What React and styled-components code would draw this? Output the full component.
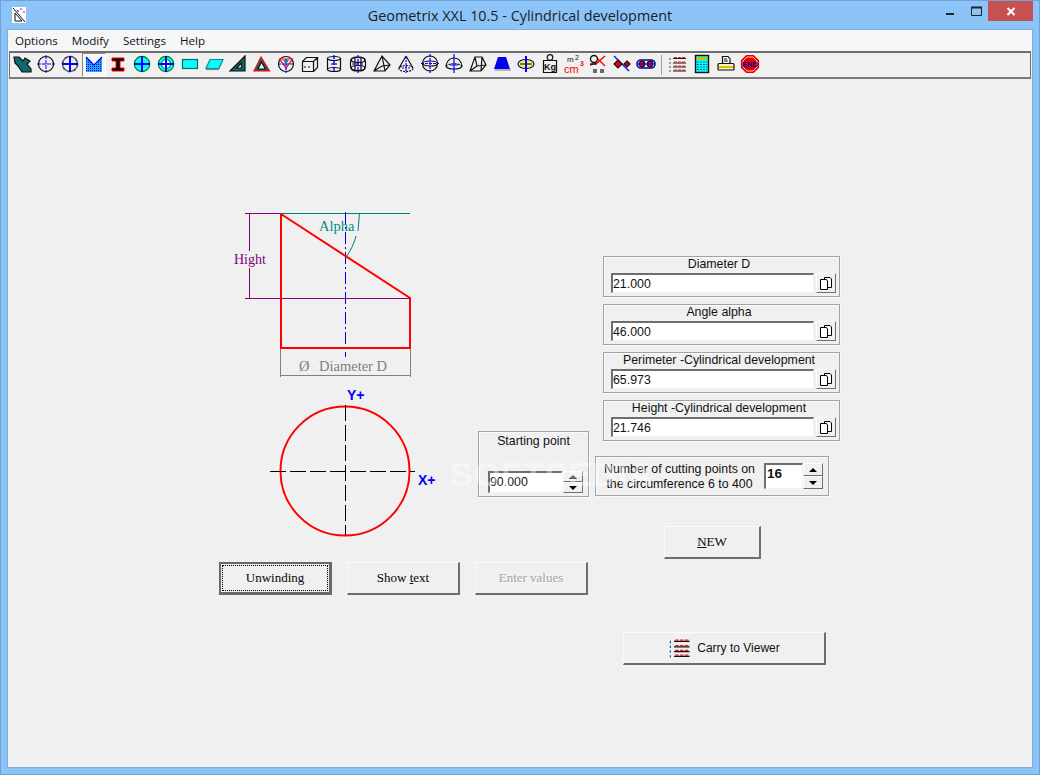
import React from 'react';
import styled, { createGlobalStyle } from 'styled-components';

const GlobalStyle = createGlobalStyle`
  html, body { margin: 0; padding: 0; background: #8cc4f8; }
  body { width: 1040px; height: 775px; overflow: hidden; font-family: "Liberation Sans", Arial, sans-serif; }
`;

const Window = styled.div`
  position: relative;
  width: 1040px;
  height: 775px;
  box-sizing: border-box;
  background: #8cc4f8;
  border: 1px solid #6fa3d8;
  display: flex;
  flex-direction: column;
  overflow: hidden;
`;

const TitleBar = styled.div`
  height: 29px;
  display: flex;
  align-items: flex-start;
  position: relative;
  flex: none;
`;

const AppIcon = styled.svg`
  margin: 6px 0 0 11px;
  flex: none;
`;

const Title = styled.div`
  position: absolute;
  left: 0;
  right: 0;
  top: 5px;
  text-align: center;
  font: 14.4px/20px "Open Sans", sans-serif;
  color: #1c1c1c;
`;

const Controls = styled.div`
  margin-left: auto;
  margin-right: 6px;
  display: flex;
  align-items: flex-start;
`;

const ControlButton = styled.div`
  width: ${p => p.$w}px;
  height: 20px;
  display: flex;
  align-items: center;
  justify-content: center;
  background: ${p => (p.$close ? '#c75050' : 'transparent')};
`;

const Client = styled.div`
  margin: 0 7px 7px 7px;
  flex: 1;
  display: flex;
  flex-direction: column;
  background: #f0f0f0;
  box-shadow: 0 0 0 1px #7eaee0;
`;

const MenuBar = styled.div`
  height: 21px;
  flex: none;
  background: #f5f6f7;
  display: flex;
  gap: 14px;
  padding-left: 7px;
  font: 11.6px/21px "Open Sans", sans-serif;
  color: #111;
`;

const Toolbar = styled.div`
  height: 24px;
  flex: none;
  margin: 0 1px;
  display: flex;
  border-top: 2px solid #6e6e6e;
  border-bottom: 2px solid #7a7a7a;
  border-left: 1px solid #6e6e6e;
  border-right: 1px solid #6e6e6e;
  box-sizing: content-box;
  background: #f0f0f0;
`;

const ToolButton = styled.div`
  width: 24px;
  height: 24px;
  box-sizing: border-box;
  flex: none;
  display: flex;
  justify-content: center;
  padding-top: 1px;
  ${p => p.$active && `
    background: #f7f7f7;
    border: 1px solid;
    border-color: #8a8a8a #fff #fff #8a8a8a;
    padding-top: 0;
  `}
`;

const ToolSeparator = styled.div`
  width: 8px;
  flex: none;
  display: flex;
  justify-content: flex-start;
  &::before {
    content: '';
    width: 1px;
    margin: 2px 0 2px 3px;
    background: #a0a0a0;
  }
`;

const Form = styled.div`
  flex: 1;
  display: flex;
  gap: 6px;
  padding-left: 211px;
  position: relative;
`;

const LeftColumn = styled.div`
  width: 370px;
  padding-top: 121px;
`;

const DrawingRow = styled.div`
  display: flex;
  align-items: flex-start;
  height: 350px;
`;

const Drawing = styled.svg`
  display: block;
  flex: none;
`;

const GroupBox = styled.div`
  box-sizing: border-box;
  border: 1px solid #a2a2a2;
  box-shadow: inset 1px 1px 0 #fbfbfb, 1px 1px 0 #fbfbfb;
  font-size: 12.35px;
  color: #111;
`;

const StartBox = styled(GroupBox)`
  width: 111px;
  height: 66px;
  margin-top: 231px;
  padding: 2px 5px 3px 9px;
  line-height: 15px;
  display: flex;
  flex-direction: column;
  justify-content: space-between;
`;

const StartLabel = styled.div`
  text-align: center;
  padding-right: 4px;
`;

const SpinRow = styled.div`
  display: flex;
  height: 22px;
`;

const Sunken = styled.div`
  box-sizing: border-box;
  flex: 1;
  background: #fff;
  border-style: solid;
  border-width: 2px 1px 1px 2px;
  border-color: #6e6e6e #f0f0f0 #f0f0f0 #6e6e6e;
  padding-left: ${p => (p.$bold ? '1px' : '0')};
  font-size: ${p => (p.$bold ? '13.5px' : '12.35px')};
  font-weight: ${p => (p.$bold ? 700 : 400)};
  line-height: 18px;
  text-align: left;
  color: #111;
`;

const Spin = styled.div`
  width: 20px;
  flex: none;
  display: flex;
  flex-direction: column;
`;

const SpinPart = styled.div`
  flex: 1;
  display: flex;
  align-items: center;
  justify-content: center;
  box-sizing: border-box;
  border: 1px solid;
  border-color: #fff #6e6e6e #6e6e6e #fff;
  background: #f0f0f0;
  &::before {
    content: '';
    border-left: 4px solid transparent;
    border-right: 4px solid transparent;
    ${p => (p.$down ? 'border-top: 4px solid #000;' : 'border-bottom: 4px solid #000;')}
  }
`;

const ButtonRow = styled.div`
  display: flex;
  gap: 15px;
  margin-top: 12px;
`;

const Button = styled.div`
  box-sizing: border-box;
  width: ${p => p.$w}px;
  height: 33px;
  flex: none;
  display: flex;
  align-items: center;
  justify-content: center;
  gap: 5px;
  background: #f0f0f0;
  border-style: solid;
  border-width: 1px 2px 2px 1px;
  border-color: #fbfbfb #6e6e6e #6e6e6e #fbfbfb;
  font: 13px "Liberation Serif", "Times New Roman", serif;
  -webkit-text-stroke: 0.08px;
  color: ${p => (p.$disabled ? '#a6a6a6' : '#111')};
  ${p => p.$disabled && 'text-shadow: 1px 1px 0 #fff;'}
  ${p => p.$focused && `
    border-width: 2px 3px 3px 2px;
    border-color: #6a6a6a;
    position: relative;
    &::after {
      content: '';
      position: absolute;
      inset: 1px;
      border: 1px dotted #000;
    }
  `}
`;

const SansButton = styled(Button)`
  font: 12px "Liberation Sans", Arial, sans-serif;
  -webkit-text-stroke: 0;
`;

const RightColumn = styled.div`
  width: 246px;
  padding-top: 177px;
  display: flex;
  flex-direction: column;
  align-items: flex-start;
`;

const FieldStack = styled.div`
  margin-left: 8px;
  display: flex;
  flex-direction: column;
  gap: 7px;
`;

const FieldBox = styled(GroupBox)`
  width: 237px;
  height: 41px;
  padding: 0 3px 0 7px;
  display: flex;
  flex-direction: column;
`;

const FieldLabel = styled.div`
  height: 16px;
  line-height: 14px;
  text-align: center;
  padding-right: 9px;
`;

const FieldRow = styled.div`
  display: flex;
  height: 20px;
  gap: 2px;
`;

const CopyButton = styled.div`
  width: 20px;
  box-sizing: border-box;
  flex: none;
  display: flex;
  align-items: center;
  justify-content: center;
  border: 1px solid;
  border-color: #fff #6e6e6e #6e6e6e #fff;
`;

const CountBox = styled(GroupBox)`
  width: 234px;
  height: 40px;
  margin-top: 15px;
  display: flex;
  align-items: center;
  padding: 0 5px 0 6px;
`;

const CountLabel = styled.div`
  width: 155px;
  text-align: center;
  line-height: 15px;
  flex: none;
  padding-top: 1px;
`;

const CountInput = styled.div`
  display: flex;
  width: 60px;
  height: 26px;
  margin-left: 7px;
`;

const NewButton = styled(Button)`
  margin: 30px 0 0 69px;
`;

const CarryButton = styled(SansButton)`
  margin: 73px 0 0 28px;
`;

const Watermark = styled.div`
  position: absolute;
  left: 442px;
  top: 375px;
  font: 700 34px/40px "Liberation Sans", sans-serif;
  letter-spacing: 1px;
  color: rgba(255, 255, 255, 0.42);
  pointer-events: none;
`;

const Ico = ({ children }) => (
  <svg width="20" height="20" viewBox="0 0 20 20" fill="none" strokeWidth="1.2">{children}</svg>
);

const Cross = ({ w = 1, c = '#0000ff' }) => (
  <path d="M10 2V18M2 10H18" stroke={c} strokeWidth={w} />
);

const ListIcon = () => (
  <g strokeWidth="1">
    <path d="M5 4.5H18M5 9H18M5 13H18M5 17H18" stroke="#111" />
    <path d="M6 3.5H17M6 8H17M6 12H17M6 16H17" stroke="#d22" strokeDasharray="3 1" />
    <path d="M2 4V6M2 8V10M2 12V14M2 16V18" stroke="#0a5ea8" />
  </g>
);

const tools = [
  <Ico><path d="M2 3L7 3L11 7L13 4L18 7L15 10L19 15L19 18L10 18L6 12L3 9Z" fill="#0d6b6b" stroke="#111" /></Ico>,
  <Ico><circle cx="10" cy="10" r="7.5" stroke="#111" /><path d="M10 1V19M1 10H19" stroke="#0000ff" strokeWidth="1" strokeDasharray="4 1" /></Ico>,
  <Ico><circle cx="10" cy="10" r="7.5" stroke="#0a8a8a" strokeWidth="1.6" /><circle cx="10" cy="10" r="7.5" stroke="#f00" strokeWidth="1.6" strokeDasharray="2 3.9" /><Cross w={2} /></Ico>,
  <Ico>
    <defs>
      <pattern id="dots" width="2" height="2" patternUnits="userSpaceOnUse"><rect width="2" height="2" fill="#27a7f0" /><rect width="1" height="1" fill="#0000ff" /></pattern>
    </defs>
    <path d="M2 3L10 11L18 3V18H2Z" fill="url(#dots)" />
    <path d="M2 3L10 11L18 3" stroke="#0000ff" />
  </Ico>,
  <Ico><path d="M4 4H16V7H12V14H16V17H4V14H8V7H4Z" fill="#000" stroke="#f00" strokeWidth="1" /></Ico>,
  <Ico><circle cx="10" cy="10" r="7.7" fill="#00ffff" stroke="#008000" /><Cross w={2} /></Ico>,
  <Ico><circle cx="10" cy="10" r="7.7" fill="#00ffff" stroke="#008000" /><circle cx="10" cy="10" r="4.5" fill="#fff" stroke="#008000" /><Cross w={2} /></Ico>,
  <Ico><rect x="2.5" y="5.5" width="15" height="9" fill="#00ffff" stroke="#0a6b6b" /></Ico>,
  <Ico><path d="M6 5.5H19L15 14.5H2Z" fill="#00ffff" stroke="#0a8a8a" /><path d="M2 15.5H15" stroke="#888" /></Ico>,
  <Ico><path d="M17 2V17H2Z" fill="#0d6b6b" stroke="#111" /><path d="M13.5 9V14H8.5Z" fill="#f0f0f0" stroke="#111" /></Ico>,
  <Ico><path d="M9 3L17.5 17H2Z" fill="#0d6b6b" stroke="#f00" /><path d="M9.3 8L13.5 15H6Z" fill="#f0f0f0" stroke="#111" /></Ico>,
  <Ico><circle cx="10" cy="10" r="7.5" stroke="#111" /><path d="M3.5 5H16.5L10 14Z" fill="#f0f0f0" stroke="#f00" /><path d="M10 5V19M2 10H18" stroke="#0000ff" strokeDasharray="3 1" /><path d="M7 6H13L10 10Z" fill="#0d8a8a" /></Ico>,
  <Ico><path d="M2.5 7.5H13.5V17.5H2.5ZM2.5 7.5L6.5 3.5H17.5L13.5 7.5M17.5 3.5V13.5L13.5 17.5" stroke="#111" /><path d="M4 13H12" stroke="#111" strokeDasharray="2 2" /></Ico>,
  <Ico><ellipse cx="10" cy="4.5" rx="6.5" ry="2" stroke="#111" /><path d="M3.5 4.5V15.5M16.5 4.5V15.5" stroke="#111" /><ellipse cx="10" cy="15.5" rx="6.5" ry="2" stroke="#111" /><path d="M10 1V19" stroke="#0000ff" strokeWidth="1.4" strokeDasharray="4 2" /><path d="M7 10H13" stroke="#0000ff" /></Ico>,
  <Ico><rect x="2.5" y="3" width="15" height="14" rx="5" stroke="#111" /><ellipse cx="10" cy="6" rx="7" ry="2.5" stroke="#111" /><ellipse cx="10" cy="14" rx="7" ry="2.5" stroke="#111" /><path d="M7 3V17M13 3V17" stroke="#111" /><path d="M10 1V19M4 10H16" stroke="#0000ff" strokeDasharray="3 1" /></Ico>,
  <Ico><path d="M10 2L2 17H13L18 11ZM10 2L13 17M2 17L10 12L18 11" stroke="#111" /></Ico>,
  <Ico><path d="M10 2L3 14M10 2L17 14" stroke="#111" /><ellipse cx="10" cy="14.5" rx="7" ry="3" stroke="#111" strokeDasharray="2 1" /><path d="M10 3V19M6 14H14" stroke="#0000ff" strokeDasharray="2 1" /></Ico>,
  <Ico><circle cx="10" cy="9.5" r="7.5" stroke="#111" /><ellipse cx="10" cy="9.5" rx="7.5" ry="2.5" stroke="#111" /><path d="M10 0V19M1 9.5H19" stroke="#0000ff" strokeDasharray="3 1" /></Ico>,
  <Ico><path d="M2 12C3 6 7 4 10 4C13 4 17 6 18 12C17 16 3 16 2 12Z" stroke="#111" /><path d="M2 12C5 9 15 9 18 12" stroke="#111" strokeDasharray="2 1" /><path d="M10 0V19M6 11H14" stroke="#0000ff" /></Ico>,
  <Ico><path d="M7 3H14L18 11L13 17H2ZM14 3L13 17M7 3L9 12L2 17M9 12L18 11" stroke="#111" /></Ico>,
  <Ico><path d="M6 3H14L18 15H2Z" fill="#0000ee" /><path d="M3 16H19" stroke="#999" strokeWidth="1.4" /></Ico>,
  <Ico><ellipse cx="10" cy="10" rx="8" ry="4.5" fill="#ffff00" stroke="#0000c0" /><path d="M10 2V18" stroke="#0000ff" strokeWidth="2" /><path d="M4 10H16" stroke="#0000ff" /></Ico>,
  <Ico><path d="M3.5 6.5H16.5V18.5H3.5Z" stroke="#111" /><circle cx="10" cy="3.5" r="2.8" stroke="#111" /><text x="10" y="16" textAnchor="middle" fontSize="9" fontWeight="700" fontFamily="Liberation Sans" fill="#111" strokeWidth="0">Kg</text></Ico>,
  <Ico><text x="3" y="8" fontSize="8" fontFamily="Liberation Sans" fill="#111">m</text><text x="11" y="6" fontSize="7" fontFamily="Liberation Sans" fill="#111">2</text><text x="0" y="19" fontSize="11" fontFamily="Liberation Sans" fill="#f00">cm</text><text x="16" y="12" fontSize="7" fontWeight="700" fontFamily="Liberation Sans" fill="#f00">3</text></Ico>,
  <Ico><circle cx="6" cy="5" r="3.5" stroke="#111" strokeWidth="1.4" /><path d="M2 11L9 9L17 2M10 5L17 12" stroke="#f00" strokeWidth="1.4" /><path d="M2 10H9" stroke="#111" /><path d="M6 15V19M8 15V19M13 15V19M15 15V19" stroke="#111" /></Ico>,
  <Ico><path d="M2 2L17 17" stroke="#0000ff" /><path d="M6 6L10 10L6 14L2 10ZM15 7L18 10L15 13L12 10Z" fill="#e00" stroke="#111" /></Ico>,
  <Ico><rect x="1" y="6" width="18" height="8" rx="4" stroke="#0000a0" strokeWidth="1.6" /><circle cx="6" cy="10" r="2.8" fill="#e00" stroke="#111" /><circle cx="14" cy="10" r="2.8" fill="#e00" stroke="#111" /><path d="M2 10H18" stroke="#0000ff" /></Ico>,
  null,
  <Ico><ListIcon /></Ico>,
  <Ico><rect x="3.5" y="1.5" width="13" height="17" fill="#00ffff" stroke="#111" strokeWidth="1.4" /><rect x="5" y="3" width="10" height="3" fill="#c8c800" /><path d="M5 8H15M5 10.5H15M5 13H15M5 15.5H15" stroke="#08628a" strokeDasharray="2 1" /></Ico>,
  <Ico><path d="M6.5 2.5H12L14 5V10H6.5Z" fill="#f8f8f8" stroke="#111" /><rect x="2" y="9.5" width="16" height="6.5" rx="1" fill="#f4f4c0" stroke="#111" /><path d="M3 13H17" stroke="#e0c000" strokeWidth="2" /><path d="M8 5H11M8 7H12" stroke="#111" /></Ico>,
  <Ico><path d="M6.5 1.5H13.5L18.5 6.5V13.5L13.5 18.5H6.5L1.5 13.5V6.5Z" fill="#e80000" stroke="#e80000" /><path d="M7 3H13L17 7V13L13 17H7L3 13V7Z" stroke="#fff" strokeWidth="0.8" /><text x="10" y="12.8" textAnchor="middle" fontSize="7.5" fontWeight="700" fontFamily="Liberation Sans" fill="#0000a0">END</text></Ico>,
];

const CopyIcon = () => (
  <svg width="14" height="14" viewBox="0 0 14 14" fill="none">
    <path d="M5.5 1.5H11L12.5 3V11.5H5.5Z" fill="#fff" stroke="#000" />
    <path d="M1.5 3.5H7.5L8.5 5V13.5H1.5Z" fill="#fff" stroke="#000" />
  </svg>
);

const Field = ({ label, value }) => (
  <FieldBox>
    <FieldLabel>{label}</FieldLabel>
    <FieldRow>
      <Sunken>{value}</Sunken>
      <CopyButton><CopyIcon /></CopyButton>
    </FieldRow>
  </FieldBox>
);

const serif = '"Liberation Serif", "Times New Roman", serif';
const sans = '"Liberation Sans", Arial, sans-serif';

// viewBox uses page coordinates, so the figure can be read straight off the screenshot
const Figure = () => (
  <Drawing width="259" height="350" viewBox="219 200 259 350" fill="none">
    <path d="M280 213.5H410" stroke="#008080" />
    <path d="M245 213.5H280M245 298.5H410M249.5 213V251M249.5 268V298" stroke="#800080" />
    <path d="M345.5 212V357" stroke="#0000c8" strokeDasharray="12 3 2 3" />
    <path d="M359.5 213L358 231M356 236C354 244 350 252 346 257" stroke="#008080" />
    <path d="M281 214V348H410V298L281 214" stroke="#f00" strokeWidth="2" />
    <path d="M280.5 349V377M410.5 349V377M280 375.5H411" stroke="#808080" />
    <text x="319" y="231" fontSize="14.5" fontFamily={serif} fill="#008b8b">Alpha</text>
    <text x="234" y="264" fontSize="14" fontFamily={serif} fill="#800080">Hight</text>
    <text x="299" y="371" fontSize="14.5" fontFamily={serif} fill="#808080">Ø</text>
    <text x="319" y="371" fontSize="14.5" fontFamily={serif} fill="#808080">Diameter D</text>
    <circle cx="345" cy="471" r="64.5" stroke="#f00" strokeWidth="2" />
    <path d="M270 471.5H415M345.5 405V535" stroke="#000" strokeDasharray="16 4" />
    <text x="347" y="400" fontSize="14" fontWeight="700" fontFamily={sans} fill="#0000ff">Y+</text>
    <text x="418" y="485" fontSize="14" fontWeight="700" fontFamily={sans} fill="#0000ff">X+</text>
  </Drawing>
);

export default function App() {
  return (
    <>
      <GlobalStyle />
      <Window>
        <TitleBar>
          <AppIcon width="14" height="16" viewBox="0 0 14 16" fill="none">
            <rect width="14" height="16" fill="#fff" />
            <path d="M1 1L13 15M3 14H10L3 6Z" stroke="#111" />
            <path d="M8 2H10M11 5H13" stroke="#e0007a" />
            <path d="M5 4H7" stroke="#0000ff" />
          </AppIcon>
          <Title>Geometrix XXL 10.5 - Cylindrical development</Title>
          <Controls>
            <ControlButton $w={29}>
              <svg width="10" height="10" viewBox="0 0 10 10"><rect x="1" y="7" width="8" height="2" fill="#222" /></svg>
            </ControlButton>
            <ControlButton $w={24}>
              <svg width="11" height="10" viewBox="0 0 11 10" fill="none"><path d="M.5 1.5H10.5V9.5H.5Z" stroke="#222" /><path d="M0 1.5H11" stroke="#222" strokeWidth="2" /></svg>
            </ControlButton>
            <ControlButton $w={45} $close>
              <svg width="10" height="9" viewBox="0 0 10 9"><path d="M1.5 1L8.5 8M8.5 1L1.5 8" stroke="#fff" strokeWidth="2" /></svg>
            </ControlButton>
          </Controls>
        </TitleBar>
        <Client>
          <MenuBar>
            <span>Options</span>
            <span>Modify</span>
            <span>Settings</span>
            <span>Help</span>
          </MenuBar>
          <Toolbar>
            {tools.map((icon, i) =>
              icon ? <ToolButton key={i} $active={i === 3}>{icon}</ToolButton> : <ToolSeparator key={i} />
            )}
          </Toolbar>
          <Form>
            <LeftColumn>
              <DrawingRow>
                <Figure />
                <StartBox>
                  <StartLabel>Starting point</StartLabel>
                  <SpinRow>
                    <Sunken>90.000</Sunken>
                    <Spin>
                      <SpinPart />
                      <SpinPart $down />
                    </Spin>
                  </SpinRow>
                </StartBox>
              </DrawingRow>
              <ButtonRow>
                <Button $w={113} $focused>Unwinding</Button>
                <Button $w={113}><span>Show <u>t</u>ext</span></Button>
                <Button $w={113} $disabled>Enter values</Button>
              </ButtonRow>
            </LeftColumn>
            <RightColumn>
              <FieldStack>
                <Field label="Diameter D" value="21.000" />
                <Field label="Angle alpha" value="46.000" />
                <Field label="Perimeter -Cylindrical development" value="65.973" />
                <Field label="Height -Cylindrical development" value="21.746" />
              </FieldStack>
              <CountBox>
                <CountLabel>Number of cutting points on the circumference 6 to 400</CountLabel>
                <CountInput>
                  <Sunken $bold>16</Sunken>
                  <Spin>
                    <SpinPart />
                    <SpinPart $down />
                  </Spin>
                </CountInput>
              </CountBox>
              <NewButton $w={97}><span><u>N</u>EW</span></NewButton>
              <CarryButton $w={203}>
                <svg width="24" height="24" viewBox="0 0 20 20" fill="none"><ListIcon /></svg>
                Carry to Viewer
              </CarryButton>
            </RightColumn>
            <Watermark>SOFTPEDIA</Watermark>
          </Form>
        </Client>
      </Window>
    </>
  );
}
